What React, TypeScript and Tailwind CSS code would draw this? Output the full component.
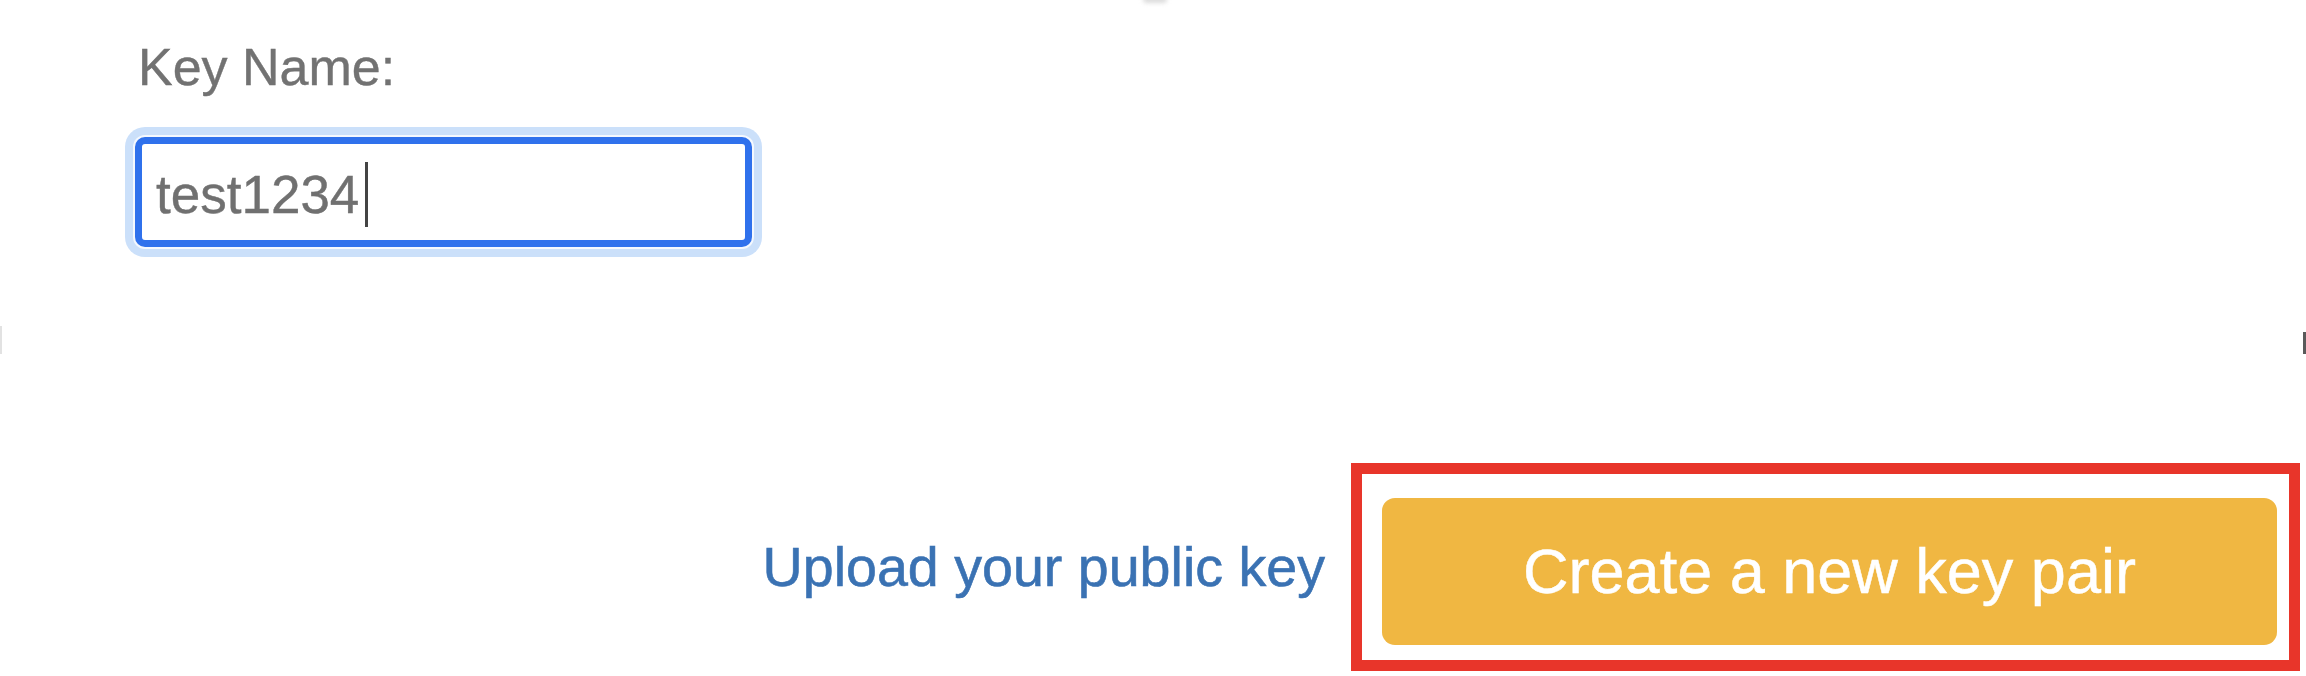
export default function App() {
  return (
    <div
      className="relative w-[2306px] h-[676px] overflow-hidden bg-white flex flex-col pt-[41px]"
      style={{ fontFamily: '"Liberation Sans", Arial, Helvetica, sans-serif' }}
    >
      {/* faint edge artifacts */}
      <div className="absolute left-[1143px] top-[-4px] w-[24px] h-[7px] rounded-full bg-[#dcdcdc] blur-[2px]" />
      <div className="absolute left-0 top-[326px] w-[2px] h-[28px] bg-[#e2e2e2]" />
      <div className="absolute right-0 top-[332px] w-[3px] h-[22px] bg-[#5a5a5a]" />

      <div className="ml-[138px] text-[52px] leading-[52px] text-[#727272] [-webkit-text-stroke:0.4px_#727272]">
        Key Name:
      </div>

      <div className="ml-[135px] mt-[44px] w-[617px] h-[110px] box-border border-[7px] border-[#2f71ec] rounded-[10px] shadow-[0_0_0_2px_#f4f8fe,0_0_0_10px_#cbe0fa] flex items-center pl-[14px] pt-[5px]">
        <div className="flex items-center">
          <span className="text-[53px] leading-[53px] text-[#707070] [-webkit-text-stroke:0.4px_#707070]">test1234</span>
          <span className="ml-[6px] w-[3px] h-[65px] bg-[#444444]" />
        </div>
      </div>

      <div className="mt-[216px] flex justify-end items-center pr-[6px]">
        <span className="mr-[26px] text-[55.6px] leading-[56px] text-[#3a72b3] [-webkit-text-stroke:0.6px_#3a72b3] whitespace-nowrap">
          Upload your public key
        </span>
        <div className="w-[949px] h-[208px] box-border border-[11px] border-[#e8352a] pl-[20px] pt-[24px]">
          <div className="w-[895px] h-[147px] rounded-[13px] bg-[#f0b742] flex items-center justify-center">
            <span className="text-[63px] leading-[63px] text-white [-webkit-text-stroke:0.5px_#ffffff] whitespace-nowrap">
              Create a new key pair
            </span>
          </div>
        </div>
      </div>
    </div>
  );
}
